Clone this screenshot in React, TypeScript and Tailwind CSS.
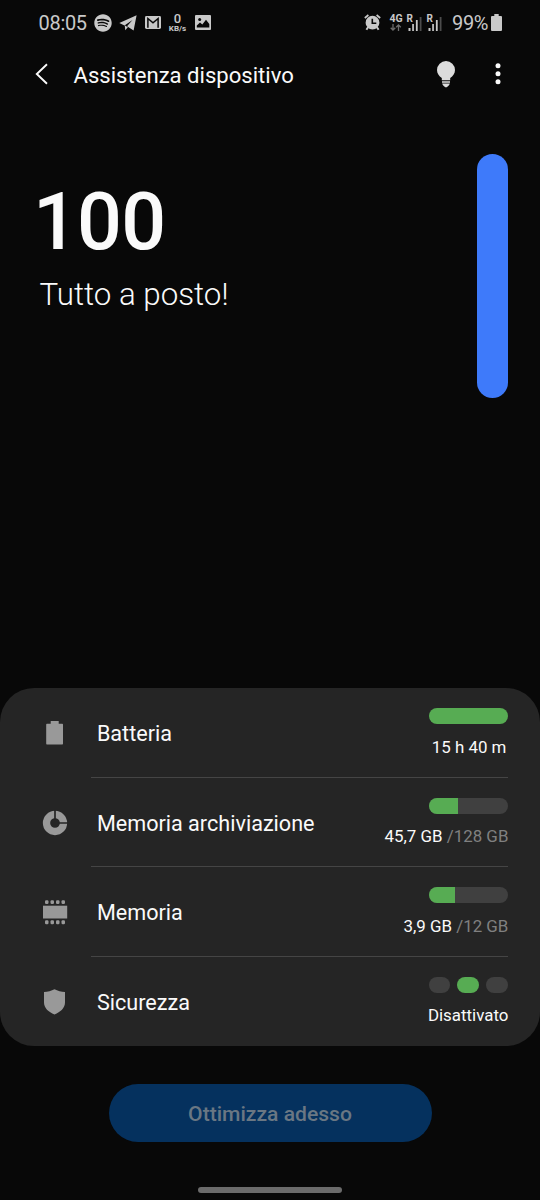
import type { ReactNode } from "react";
import { FaSpotify } from "react-icons/fa";

interface RowProps {
  icon: ReactNode;
  label: string;
  meter: ReactNode;
  value: ReactNode;
  last?: boolean;
}

function TelegramIcon() {
  return (
    <svg viewBox="0 0 18 16" className="h-4 w-[18px]" fill="#c9c9c9">
      <path d="M17.6.2L14.6 15.4 8 11.300 13.500 5 5.500 10.400.3 7.900z" />
      <path d="M5.700 10.300l3.100 2-2.500 2.900z" />
    </svg>
  );
}

function GmailIcon() {
  return (
    <svg viewBox="0 0 16 13" className="w-4 h-[13px]">
      <rect width="16" height="13" rx="1.4" fill="#c9c9c9" />
      <path d="M2.9 11.8V2.5L8 6.8l5.100-4.300v9.300" fill="none" stroke="#080808" strokeWidth="1.5" />
    </svg>
  );
}

function PictureIcon() {
  return (
    <svg viewBox="0 0 16 15" className="w-4 h-[15px]">
      <rect width="16" height="15" rx="1" fill="#c9c9c9" />
      <path d="M1.8 12.5V10.5L5 7.6l2.3 2L11 4.7l3.3 4.3v3.500z" fill="#080808" />
      <circle cx="4.7" cy="4.5" r="1.5" fill="#080808" />
    </svg>
  );
}

function AlarmIcon() {
  return (
    <svg viewBox="0 0 17 17" className="w-[17px] h-[17px]" fill="none" stroke="#c9c9c9">
      <circle cx="8.5" cy="8.7" r="6.9" fill="#c9c9c9" stroke="none" />
      <path d="M.8 4l3.600-3M16.2 4l-3.600-3" strokeWidth="1.7" />
      <path d="M4.2 13l-1.800 2.700M12.8 13l1.800 2.700" strokeWidth="2" />
      <path d="M8.3 4.8v4.400h4" stroke="#080808" strokeWidth="1.6" />
    </svg>
  );
}

function SignalIcon() {
  return (
    <svg viewBox="0 0 15 18" className="w-[15px] h-[18px] overflow-visible">
      <text x="-0.5" y="8" fill="#c9c9c9" fontSize="10" fontWeight="700">R</text>
      <path d="M1.5 14h2v3h-2zM5.2 10h1.700V17H5.200zM8.900 6h1.800V17H8.900z" fill="#c9c9c9" />
      <path d="M12.700 3h1.800V17h-1.800z" fill="#4c4c4c" />
    </svg>
  );
}

function StatusBar() {
  return (
    <div className="flex h-[45px] items-center pl-[38.5px] pr-[38px] text-[#c9c9c9]">
      <span className="w-[55.5px] text-[20px] tracking-[-0.3px]">08:05</span>
      <FaSpotify className="size-[18px]" />
      <span className="ml-[7px]"><TelegramIcon /></span>
      <span className="ml-[8px]"><GmailIcon /></span>
      <span className="ml-[6.5px] flex w-[20px] flex-col items-center font-bold">
        <span className="text-[13px] leading-[13px] font-medium">0</span>
        <span className="text-[8px] leading-[8px]">KB/s</span>
      </span>
      <span className="ml-[7px]"><PictureIcon /></span>
      <div className="ml-auto flex items-center">
        <AlarmIcon />
        <span className="ml-[8.5px] flex w-[14px] flex-col items-center">
          <span className="text-[10.5px] leading-[10px] font-bold">4G</span>
          <svg viewBox="0 0 12 7" className="h-[7px] w-[12px]" fill="none" stroke="#6c6c6c" strokeWidth="1.3">
            <path d="M3 0v6M.7 3.700L3 6l2.300-2.300M8.500 7V1M6.200 3.300L8.500 1l2.300 2.300" />
          </svg>
        </span>
        <span className="ml-[4px]"><SignalIcon /></span>
        <span className="ml-[4.5px]"><SignalIcon /></span>
        <span className="ml-[10.5px] text-[20px] tracking-[-0.4px]">99%</span>
        <svg viewBox="0 0 11 17" className="ml-[3px] h-[17px] w-[11px]">
          <path d="M3.3 0h4.400v2H10a1 1 0 0 1 1 1v13a1 1 0 0 1-1 1H1a1 1 0 0 1-1-1V3a1 1 0 0 1 1-1h2.300z" fill="#c9c9c9" />
        </svg>
      </div>
    </div>
  );
}

function AppBar() {
  return (
    <header className="flex h-[58px] items-center pl-[35px] pr-[39.5px]">
      <svg viewBox="0 0 14 22" className="h-[22px] w-[14px]" fill="none" stroke="#fafafa" strokeWidth="1.9">
        <path d="M12 1.3L1.8 11 12 20.7" />
      </svg>
      <h1 className="ml-[24.5px] pt-[3px] text-[22.1px] text-[#fafafa]">Assistenza dispositivo</h1>
      <svg viewBox="0 0 18 27" className="ml-auto h-[27px] w-[18px]" fill="#dcdcdc">
        <path d="M9 0a9 9 0 0 1 9 9c0 3.600-2 6-4.800 8v2.200H4.800V17C2 15 0 12.600 0 9a9 9 0 0 1 9-9z" />
        <path d="M5 20.200h8v1.500H5zM5.200 22.500h7.600c-.4 1.800-1.800 3-3.800 3.900-2-.9-3.400-2.100-3.800-3.900z" />
      </svg>
      <svg viewBox="0 0 6 22" className="ml-[39.5px] h-[22px] w-[6px]" fill="#fafafa">
        <circle cx="3" cy="2.8" r="2.5" />
        <circle cx="3" cy="10.8" r="2.5" />
        <circle cx="3" cy="18.8" r="2.5" />
      </svg>
    </header>
  );
}

function Meter({ percent }: { percent: number }) {
  return (
    <div className="h-4 w-[79px] overflow-hidden rounded-full bg-[#404040]">
      <div className="h-full bg-[#57ac53]" style={{ width: `${percent}%` }} />
    </div>
  );
}

function SecurityDots() {
  return (
    <div className="flex h-4 w-[79px] justify-between">
      <div className="w-[21px] rounded-full bg-[#404040]" />
      <div className="w-[22px] rounded-full bg-[#57ac53]" />
      <div className="w-[22px] rounded-full bg-[#404040]" />
    </div>
  );
}

function Row({ icon, label, meter, value, last }: RowProps) {
  return (
    <div className="flex h-[89.5px] pr-[31.6px]">
      <div className="flex w-[91.4px] items-center pl-[42px]">{icon}</div>
      <div className={`flex flex-1 justify-between pl-[5.5px] ${last ? "" : "border-b-[1.5px] border-[#454545]"}`}>
        <span className="pt-[29px] text-[21.6px] leading-[34px] text-[#fafafa]">{label}</span>
        <div className="flex flex-col items-end pt-[20px]">
          {meter}
          <span className="mt-[10.5px] text-[16.9px] leading-[24px] text-[#fafafa]">{value}</span>
        </div>
      </div>
    </div>
  );
}

export default function App() {
  return (
    <div className="flex h-[1200px] w-[540px] flex-col overflow-hidden bg-[#080808] font-[Roboto,sans-serif]">
      <StatusBar />
      <AppBar />

      <section className="flex h-[585.4px] justify-between pl-[33px] pr-[31.6px] pt-[51px]">
        <div className="pt-[28px]">
          <div className="text-[79px] leading-[80px] font-medium tracking-[-0.8px] text-[#fafafa]">100</div>
          <div className="pl-[6.5px] pt-[13px] text-[31.3px] leading-[40px] font-light text-[#fafafa]">Tutto a posto!</div>
        </div>
        <div className="h-[244px] w-[31.5px] rounded-full bg-[#3e7afa]" />
      </section>

      <section className="rounded-[34px] bg-[#252525]">
        <Row
          icon={
            <svg viewBox="0 0 26 26" className="size-[26px]" fill="#999999">
              <path d="M8.7 1h8v2.700h3.600a.7.7 0 0 1 .7.700v19.400a.7.7 0 0 1-.7.700H4.900a.7.7 0 0 1-.7-.700V4.400a.7.7 0 0 1 .7-.700h3.800z" />
            </svg>
          }
          label="Batteria"
          meter={<Meter percent={100} />}
          value={<span className="pr-[2px]">15 h 40 m</span>}
        />
        <Row
          icon={
            <svg viewBox="0 0 26 26" className="size-[26px]">
              <circle cx="13" cy="13" r="8.5" fill="none" stroke="#999999" strokeWidth="7.3" />
              <path d="M13 0v10M16 13h10" stroke="#252525" strokeWidth="1.7" />
            </svg>
          }
          label="Memoria archiviazione"
          meter={<Meter percent={36.5} />}
          value={<>45,7 GB <span className="text-[#808080]">/128 GB</span></>}
        />
        <Row
          icon={
            <svg viewBox="0 0 26 26" className="size-[26px]" fill="#999999">
              <rect x="1" y="6.7" width="24.2" height="12.8" />
              {[3, 8.5, 14, 19.5].map((x) => (
                <g key={x}>
                  <rect x={x} y="1.2" width="3.5" height="3.7" rx="1.2" />
                  <rect x={x} y="21.3" width="3.5" height="3.9" rx="1.2" />
                </g>
              ))}
            </svg>
          }
          label="Memoria"
          meter={<Meter percent={32.5} />}
          value={<>3,9 GB <span className="text-[#808080]">/12 GB</span></>}
        />
        <Row
          last
          icon={
            <svg viewBox="0 0 26 26" className="size-[26px]" fill="#999999">
              <path d="M12.5.2C15.5 1.8 19.5 2.9 23 3v10.500c0 5.500-4.500 9.500-10.500 12C6.500 23 2 19 2 13.500V3C5.500 2.900 9.500 1.800 12.500.2z" />
            </svg>
          }
          label="Sicurezza"
          meter={<SecurityDots />}
          value="Disattivato"
        />
      </section>

      <footer className="flex flex-1 flex-col items-center pt-[38px]">
        <button className="h-[58px] w-[323px] rounded-full bg-[#05315e] pt-px text-[21.1px] font-medium text-[#6a7783]">
          Ottimizza adesso
        </button>
        <div className="mt-[45px] h-[5.5px] w-[144px] rounded-full bg-[#6b6b6b]" />
      </footer>
    </div>
  );
}
